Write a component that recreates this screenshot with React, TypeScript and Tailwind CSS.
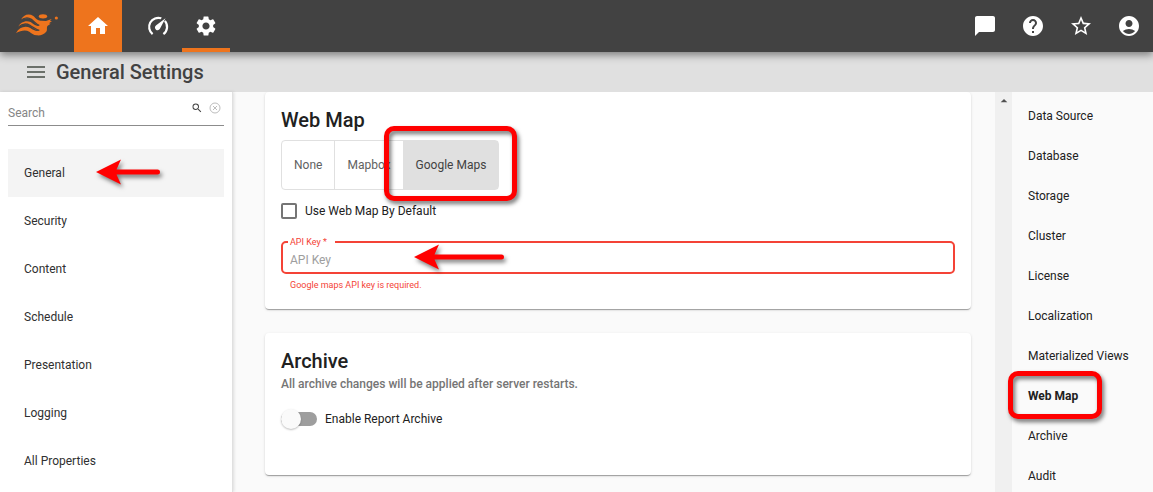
import React, { useState } from "react";
import {
  MdAccountCircle,
  MdArrowDropUp,
  MdChatBubble,
  MdHelp,
  MdHome,
  MdMenu,
  MdSearch,
  MdSettings,
  MdStarBorder,
} from "react-icons/md";

const sections = ["General", "Security", "Content", "Schedule", "Presentation", "Logging", "All Properties"];

const anchors = [
  "Data Source",
  "Database",
  "Storage",
  "Cluster",
  "License",
  "Localization",
  "Materialized Views",
  "Web Map",
  "Archive",
  "Audit",
];

const mapProviders = ["None", "Mapbox", "Google Maps"];

function Logo() {
  return (
    <svg viewBox="0 0 132 72" className="h-6 w-11 overflow-visible" fill="#ee741d" aria-hidden="true">
      <ellipse cx="81" cy="7" rx="12.500" ry="6.500" />
      <circle cx="121" cy="12" r="4.800" />
      <path d="M14 19C22 2 38 -3 52 6C60 13 65 21 76 20L90 21L107 15L102 21L108 21L99 28L104 29L95 35C90 41 96 47 90 54C83 62 74 65 62 64C52 63 47 58 40 53C28 46 14 50 0 57C10 39 28 34 43 42C52 48 60 53 70 50C60 48 53 42 42 35C30 28 18 31 6 40C12 24 30 18 44 24C54 31 61 38 70 35C61 33 55 24 46 17C36 10 26 12 14 19Z" />
      <path d="M6 40C18 29 30 27 42 34C53 41 60 47 70 49M14 19C26 10 36 9 46 16C55 23 61 32 70 34" fill="none" stroke="#424242" strokeWidth="4" />
    </svg>
  );
}

function GaugeIcon() {
  return (
    <svg viewBox="0 0 24 24" className="size-6" fill="none" aria-hidden="true">
      <path
        d="M6.600 20.200A9.200 9.200 0 0 1 15.300 4.300M18.900 6.900A9.200 9.200 0 0 1 17.400 20.200"
        stroke="white"
        strokeWidth="2.200"
      />
      <path d="M19.500 4.200L14.200 14.300A2.700 2.700 0 1 1 10.200 11.200Z" fill="white" />
    </svg>
  );
}

function Arrow({ className, length }: { className: string; length: number }) {
  return (
    <svg
      width={length}
      height="26"
      aria-hidden="true"
      className={`pointer-events-none absolute overflow-visible drop-shadow-[2px_3px_2px_rgba(0,0,0,0.5)] ${className}`}
    >
      <path d={`M0 13L25 0.500L20.500 10.500H${length - 2.5}a2.500 2.500 0 0 1 0 5H20.500L25 25.500Z`} fill="#ff0000" />
    </svg>
  );
}

function Highlight({ className }: { className: string }) {
  return (
    <span
      className={`pointer-events-none absolute z-10 rounded-[10px] border-[5px] border-[#ff0000] drop-shadow-[2px_3px_2px_rgba(0,0,0,0.55)] ${className}`}
    />
  );
}

const cardClass =
  "rounded bg-white px-4 shadow-[0_2px_1px_-1px_rgba(0,0,0,0.2),0_1px_1px_0_rgba(0,0,0,0.14),0_1px_3px_0_rgba(0,0,0,0.12)]";

export default function App() {
  const [section, setSection] = useState("General");
  const [provider, setProvider] = useState("Google Maps");

  return (
    <div className="flex h-screen flex-col overflow-hidden bg-[#fafafa] font-[Roboto,sans-serif] text-xs text-[#212121]">
      <header className="relative z-20 flex h-13 shrink-0 items-stretch bg-[#424242] text-white shadow-[0_3px_8px_rgba(0,0,0,0.45)]">
        <a href="#top" aria-label="Start page" className="flex w-[74px] items-center pl-4">
          <Logo />
        </a>
        <button aria-label="Home" className="flex w-12 items-center justify-center bg-[#ee741d]">
          <MdHome className="size-6" />
        </button>
        <button aria-label="Monitor" className="ml-3 flex w-12 items-center justify-center">
          <GaugeIcon />
        </button>
        <button
          aria-label="Settings"
          className="flex w-12 items-center justify-center border-b-4 border-[#ee741d] pt-1"
        >
          <MdSettings className="size-6" />
        </button>
        <div className="ml-auto flex">
          <button aria-label="Messages" className="flex w-12 items-center justify-center">
            <MdChatBubble className="size-6" />
          </button>
          <button aria-label="Help" className="flex w-12 items-center justify-center">
            <MdHelp className="size-6" />
          </button>
          <button aria-label="Favorites" className="flex w-12 items-center justify-center">
            <MdStarBorder className="size-6" />
          </button>
          <button aria-label="Account" className="flex w-12 items-center justify-center">
            <MdAccountCircle className="size-6" />
          </button>
        </div>
      </header>

      <div className="flex h-10 shrink-0 items-center gap-2 bg-[#e0e0e0] pl-6 text-[#424242]">
        <button aria-label="Toggle menu" className="text-[#6b706a]">
          <MdMenu className="size-6" />
        </button>
        <h1 className="text-xl font-medium">General Settings</h1>
      </div>

      <div className="flex min-h-0 flex-1">
        <aside className="z-10 w-[233px] shrink-0 border-r border-[#e0e0e0] bg-white px-2 text-[#303030] shadow-[1px_0_3px_rgba(0,0,0,0.12)]">
          <div className="mb-[23px] flex h-[34px] items-start border-b border-[#8c8c8c]">
            <input
              aria-label="Search"
              placeholder="Search"
              className="h-[42px] min-w-0 flex-1 outline-none placeholder:text-[#858585]"
            />
            <button aria-label="Find" className="mt-2 mr-1">
              <MdSearch className="size-4 p-0.5 text-[#424242]" />
            </button>
            <button aria-label="Clear search" className="mt-2 mr-[3px]">
              <svg viewBox="0 0 12 12" className="my-0.5 size-3 text-[#bdbdbd]" fill="none" stroke="currentColor">
                <circle cx="6" cy="6" r="5" />
                <path d="M4 4L8 8M8 4L4 8" />
              </svg>
            </button>
          </div>
          <nav className="flex flex-col" aria-label="Sections">
            {sections.map((name) => (
              <button
                key={name}
                onClick={() => setSection(name)}
                className={`relative flex h-12 items-center px-4 text-left ${section === name ? "bg-[#f4f4f4]" : ""}`}
              >
                {name}
                {name === "General" && <Arrow className="top-[10px] left-[88px]" length={64} />}
              </button>
            ))}
          </nav>
        </aside>

        <main className="flex min-w-0 flex-1 flex-col gap-6 overflow-hidden pr-6 pl-8">
          <section className={`${cardClass} shrink-0 pt-4 pb-4`}>
            <h2 className="mb-2 text-xl/6 font-medium">Web Map</h2>
            <div className="relative inline-flex h-[50px] rounded border border-[#e0e0e0] text-[#616161]">
              {mapProviders.map((name) => (
                <button
                  key={name}
                  onClick={() => setProvider(name)}
                  className={`border-[#e0e0e0] px-3 not-first:border-l last:rounded-r ${
                    provider === name ? "bg-[#e0e0e0] text-[#424242]" : ""
                  }`}
                >
                  {name}
                </button>
              ))}
              <Highlight className="-top-[15px] -right-[19px] -bottom-[12px] w-[133px]" />
            </div>
            <label className="mt-[13px] flex h-4 w-fit items-center gap-2">
              <input
                type="checkbox"
                className="size-4 appearance-none rounded-xs border-2 border-[#757575] bg-white checked:bg-[#757575]"
              />
              Use Web Map By Default
            </label>
            <div className="relative mt-[22px]">
              <label htmlFor="api-key" className="absolute -top-[5px] left-[7px] bg-white pr-2 pl-0.5 text-[9px]/3 text-[#f44336]">
                API Key *
              </label>
              <input
                id="api-key"
                placeholder="API Key"
                className="block h-[33px] w-full rounded-[5px] border-2 border-[#f44336] bg-transparent px-[7px] pt-1 outline-none placeholder:text-[#9e9e9e]"
              />
              <Arrow className="top-[3px] left-[133px]" length={90} />
            </div>
            <p className="mt-[3px] pl-[9px] text-[9px]/4 text-[#f44336]">Google maps API key is required.</p>
          </section>

          <section className={`${cardClass} h-[142px] shrink-0 pt-4`}>
            <h2 className="text-xl/6 font-medium">Archive</h2>
            <p className="mt-[3px] font-medium text-[#757575]">All archive changes will be applied after server restarts.</p>
            <label className="mt-[17px] flex w-fit items-center gap-2">
              <input type="checkbox" role="switch" className="peer sr-only" />
              <span className="flex h-5 w-9 items-center peer-checked:flex-row-reverse">
                <span className="flex h-3.5 w-full items-center rounded-full bg-[#9e9e9e]">
                  <span className="size-5 rounded-full bg-[#fafafa] shadow-[0_1px_2px_rgba(0,0,0,0.25)]" />
                </span>
              </span>
              Enable Report Archive
            </label>
          </section>
        </main>

        <div className="flex w-[17px] shrink-0 justify-center bg-[#f0f0f0] pt-px">
          <MdArrowDropUp className="size-4 shrink-0 text-[#505050]" />
        </div>

        <nav className="flex w-[141px] shrink-0 flex-col pt-1" aria-label="On this page">
          {anchors.map((name) => (
            <a
              key={name}
              href={`#${name.toLowerCase().replace(" ", "-")}`}
              className={`relative flex h-10 shrink-0 items-center pl-4 ${name === "Web Map" ? "font-bold" : ""}`}
            >
              {name}
              {name === "Web Map" && <Highlight className="-top-[5px] -left-1 h-12 w-[94px]" />}
            </a>
          ))}
        </nav>
      </div>
    </div>
  );
}
